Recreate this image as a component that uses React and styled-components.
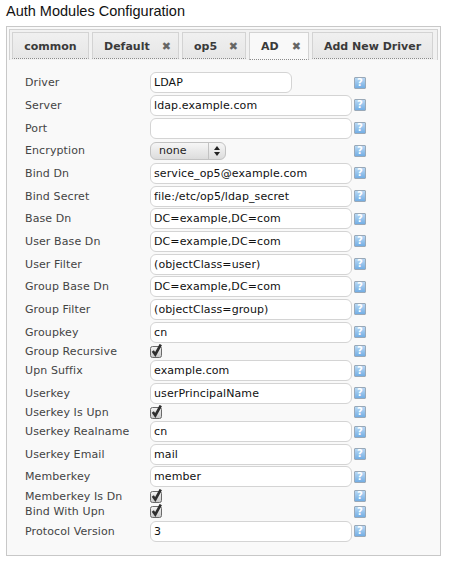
import React from "react";
import styled, { createGlobalStyle } from "styled-components";

const fields = [
  { label: "Driver", value: "LDAP", short: true },
  { label: "Server", value: "ldap.example.com" },
  { label: "Port", value: "" },
  { label: "Encryption", select: "none" },
  { label: "Bind Dn", value: "service_op5@example.com" },
  { label: "Bind Secret", value: "file:/etc/op5/ldap_secret" },
  { label: "Base Dn", value: "DC=example,DC=com" },
  { label: "User Base Dn", value: "DC=example,DC=com" },
  { label: "User Filter", value: "(objectClass=user)" },
  { label: "Group Base Dn", value: "DC=example,DC=com" },
  { label: "Group Filter", value: "(objectClass=group)" },
  { label: "Groupkey", value: "cn" },
  { label: "Group Recursive", check: true },
  { label: "Upn Suffix", value: "example.com" },
  { label: "Userkey", value: "userPrincipalName" },
  { label: "Userkey Is Upn", check: true },
  { label: "Userkey Realname", value: "cn" },
  { label: "Userkey Email", value: "mail" },
  { label: "Memberkey", value: "member" },
  { label: "Memberkey Is Dn", check: true },
  { label: "Bind With Upn", check: true },
  { label: "Protocol Version", value: "3" },
];

const tabs = [
  { name: "common", width: 77 },
  { name: "Default", width: 87, close: true },
  { name: "op5", width: 64, close: true },
  { name: "AD", width: 60, close: true, active: true },
  { name: "Add New Driver", width: 121 },
];

const GlobalStyle = createGlobalStyle`
  html, body {
    margin: 0;
    background: #fff;
  }
`;

const Page = styled.div`
  width: 472px;
  height: 563px;
  padding: 3px 0 0 6px;
  box-sizing: border-box;
  overflow: hidden;
`;

const Title = styled.h1`
  margin: 0 0 6px 0;
  font: 400 14.5px/17px "Liberation Sans", Arial, sans-serif;
  color: #111;
`;

const Panel = styled.div`
  width: 435px;
  height: 530px;
  box-sizing: border-box;
  border: 1px solid #c8c8c8;
  background: #f9f9f9;
  padding: 2px;
`;

const TabBar = styled.div`
  display: flex;
  gap: 3px;
  box-sizing: border-box;
  height: 31px;
  padding: 2px 0 0 2px;
  border: 1px solid #d2d2d2;
  border-bottom: 0;
  background: #f1f1f1;
`;

const Tab = styled.div`
  display: flex;
  align-items: center;
  justify-content: ${(p) => (p.$close ? "space-between" : "center")};
  box-sizing: border-box;
  height: ${(p) => (p.$active ? "28px" : "27px")};
  width: ${(p) => p.$width}px;
  padding: ${(p) => (p.$close ? "1px 7px 0 11px" : "1px 0 0")};
  border: 1px solid #d3d3d3;
  border-bottom: 1px dotted #8a8a8a;
  background: ${(p) =>
    p.$active ? "#f9f9f9" : "linear-gradient(#f0f0f0, #e6e6e6)"};
  font: 700 11px "DejaVu Sans", Verdana, sans-serif;
  color: #3a3a3a;
`;

const Close = styled.span`
  font: 700 11px "DejaVu Sans", Verdana, sans-serif;
  color: #666;
`;

const Form = styled.div`
  padding: 11.4px 0 0 16px;
`;

const Row = styled.div`
  display: flex;
  align-items: center;
  height: ${(p) => (p.$check ? 15.72 : 22.68)}px;
`;

const Label = styled.div`
  width: 125px;
  flex: none;
  font: 400 11px "DejaVu Sans", Verdana, sans-serif;
  letter-spacing: 0.1px;
  color: #444;
  white-space: nowrap;
`;

const Control = styled.div`
  width: 204px;
  flex: none;
  display: flex;
  align-items: center;
`;

const Input = styled.input`
  box-sizing: border-box;
  width: ${(p) => (p.$short ? 142 : 202)}px;
  height: 21px;
  padding: 0 3px;
  border: 1px solid #d4d4d4;
  border-radius: 6px;
  background: #fff;
  font: 400 11px "DejaVu Sans", Verdana, sans-serif;
  letter-spacing: 0.1px;
  color: #111;
  outline: none;
`;

const Select = styled.div`
  box-sizing: border-box;
  width: 76px;
  height: 18px;
  display: flex;
  align-items: center;
  padding-left: 8px;
  border: 1px solid #c2c2c2;
  border-radius: 6px;
  background: linear-gradient(#f6f6f6, #dcdcdc);
  font: 400 11px "DejaVu Sans", Verdana, sans-serif;
  color: #222;
`;

const SelectValue = styled.span`
  flex: 1;
`;

const Arrows = styled.svg`
  width: 16px;
  height: 16px;
  flex: none;
  border-left: 1px solid #c2c2c2;
`;

const HelpIcon = styled.span`
  box-sizing: border-box;
  width: 12px;
  height: 12px;
  flex: none;
  display: flex;
  align-items: center;
  justify-content: center;
  border: 1px solid #9aa9b8;
  border-radius: 1px;
  background: linear-gradient(#b8d8f4, #74aee4);
  font: 700 10px/10px "DejaVu Sans", Verdana, sans-serif;
  color: #fff;
`;

function Checkbox() {
  return (
    <svg width="15" height="15" viewBox="0 0 15 15">
      <defs>
        <linearGradient id="checkFill" x1="0" y1="0" x2="0" y2="1">
          <stop offset="0" stopColor="#f4f4f4" />
          <stop offset="1" stopColor="#c8c8c8" />
        </linearGradient>
      </defs>
      <rect x="0.5" y="2.5" width="11" height="11" rx="2" fill="url(#checkFill)" stroke="#6a6a6a" />
      <path d="M2.8 7 L5.3 10.5 L10.8 0.5" fill="none" stroke="#2e2e2e" strokeWidth="2.6" />
    </svg>
  );
}

export default function App() {
  return (
    <Page>
      <GlobalStyle />
      <Title>Auth Modules Configuration</Title>
      <Panel>
        <TabBar>
          {tabs.map((t) => (
            <Tab key={t.name} $close={t.close} $active={t.active} $width={t.width}>
              {t.name}
              {t.close && <Close>✖</Close>}
            </Tab>
          ))}
        </TabBar>
        <Form>
          {fields.map((f) => (
            <Row key={f.label} $check={f.check}>
              <Label>{f.label}</Label>
              <Control>
                {f.check && <Checkbox />}
                {f.select && (
                  <Select>
                    <SelectValue>{f.select}</SelectValue>
                    <Arrows viewBox="0 0 16 16">
                      <path d="M8 3 L11 7 H5 Z M8 13 L5 9 H11 Z" fill="#222" />
                    </Arrows>
                  </Select>
                )}
                {f.value !== undefined && (
                  <Input $short={f.short} defaultValue={f.value} readOnly />
                )}
              </Control>
              <HelpIcon>?</HelpIcon>
            </Row>
          ))}
        </Form>
      </Panel>
    </Page>
  );
}
